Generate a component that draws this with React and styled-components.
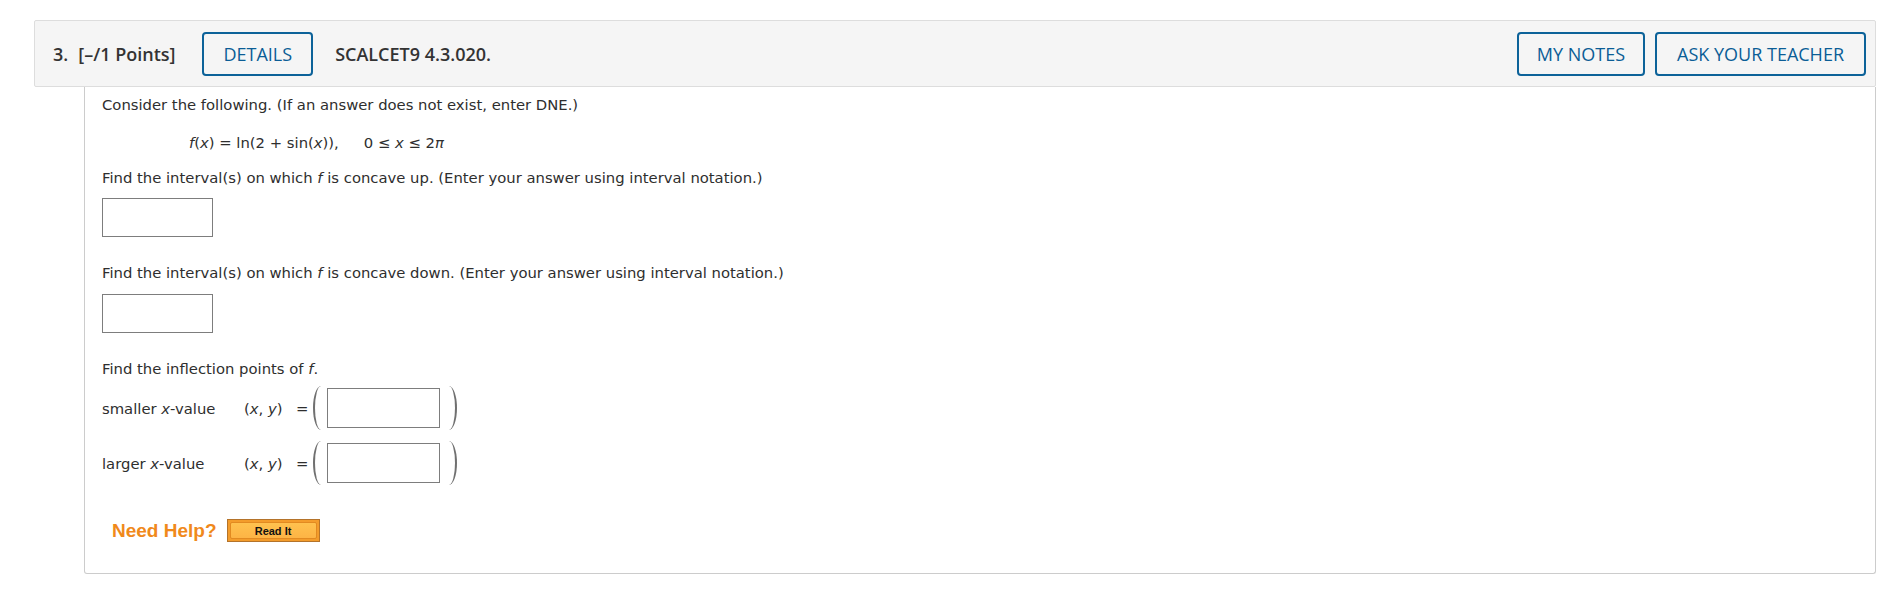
import React from "react";
import styled, { createGlobalStyle } from "styled-components";

const GlobalStyle = createGlobalStyle`
  body {
    margin: 0;
    background: #ffffff;
  }
`;

const Page = styled.div`
  padding: 20px 4px 0 34px;
`;

const Header = styled.div`
  height: 65px;
  display: flex;
  align-items: center;
  background: #f5f5f5;
  border: 1px solid #dddddd;
  border-radius: 2px;
  padding: 0 9px 0 18px;
  font-family: "Open Sans", "Liberation Sans", sans-serif;
  color: #333333;
`;

const HeadText = styled.span`
  font-size: 18px;
  font-weight: 600;
  margin-right: ${(props) => props.gap || 0}px;
`;

const OutlineButton = styled.button`
  height: 44px;
  padding: 0 ${(props) => props.pad || 16}px;
  border: 2px solid #0c6299;
  border-radius: 4px;
  background: transparent;
  color: #0b5d96;
  font-family: "Open Sans", "Liberation Sans", sans-serif;
  font-size: 18px;
  margin-right: ${(props) => props.gap || 0}px;
  cursor: pointer;
`;

const Spacer = styled.div`
  flex: 1;
`;

const Panel = styled.div`
  margin-left: 50px;
  border: 1px solid #cccccc;
  border-top: none;
  border-radius: 0 0 3px 3px;
  padding: 9px 18px 31px 17px;
  font-family: "DejaVu Sans", Verdana, sans-serif;
  font-size: 14.8px;
  line-height: 17px;
  color: #2e2e2e;
`;

const Para = styled.div`
  margin-top: ${(props) => props.top || 0}px;
  padding-left: ${(props) => props.indent || 0}px;
  white-space: pre;
`;

const I = styled.i`
  font-style: italic;
`;

const Gap = styled.span`
  display: inline-block;
  width: ${(props) => props.w}px;
`;

const AnswerBox = styled.input`
  display: block;
  box-sizing: border-box;
  width: ${(props) => props.w || 111}px;
  height: ${(props) => props.h || 39}px;
  margin-top: ${(props) => props.top || 0}px;
  border: 1px solid #7d7d7d;
  background: #ffffff;
  padding: 0 4px;
  font: inherit;
  outline: none;
`;

const PointRow = styled.div`
  display: flex;
  align-items: center;
  margin-top: ${(props) => props.top || 0}px;
`;

const RowLabel = styled.span`
  width: 142px;
`;

const Pair = styled.span`
  width: 52px;
`;

const Eq = styled.span`
  width: 15px;
`;

const Paren = styled.span`
  display: block;
  box-sizing: border-box;
  width: 8px;
  height: 44px;
  border: 0 solid #707070;
  border-left-width: ${(props) => (props.right ? 0 : 2)}px;
  border-right-width: ${(props) => (props.right ? 2 : 0)}px;
  border-radius: ${(props) =>
    props.right ? "0 100% 100% 0 / 0 50% 50% 0" : "100% 0 0 100% / 50% 0 0 50%"};
  margin: ${(props) => (props.right ? "0 0 0 9px" : "0 6px 0 2px")};
`;

const HelpRow = styled.div`
  display: flex;
  align-items: center;
  margin-top: ${(props) => props.top || 0}px;
  padding-left: 10px;
`;

const HelpText = styled.span`
  font-family: "Liberation Sans", Arial, sans-serif;
  font-weight: bold;
  font-size: 19px;
  color: #f0891b;
  margin-right: 10px;
`;

const ReadIt = styled.button`
  box-sizing: border-box;
  width: 93px;
  height: 23px;
  padding: 2px;
  border: 1px solid #b4732a;
  background: #f39c2b;
  cursor: pointer;
`;

const ReadItFace = styled.span`
  display: flex;
  align-items: center;
  justify-content: center;
  box-sizing: border-box;
  height: 100%;
  border: 1px solid #e28a21;
  border-radius: 2px;
  background: linear-gradient(#ffc24f, #fdb445);
  font-family: "Liberation Sans", Arial, sans-serif;
  font-weight: bold;
  font-size: 11px;
  color: #111111;
`;

const InflectionRow = ({ label, top }) => (
  <PointRow top={top}>
    <RowLabel>
      {label} <I>x</I>-value
    </RowLabel>
    <Pair>
      (<I>x</I>, <I>y</I>)
    </Pair>
    <Eq>=</Eq>
    <Paren />
    <AnswerBox w={113} h={40} />
    <Paren right />
  </PointRow>
);

export default function App() {
  return (
    <Page>
      <GlobalStyle />
      <Header>
        <HeadText gap={10}>3.</HeadText>
        <HeadText gap={27}>[–/1 Points]</HeadText>
        <OutlineButton pad={19} gap={22}>DETAILS</OutlineButton>
        <HeadText>SCALCET9 4.3.020.</HeadText>
        <Spacer />
        <OutlineButton pad={18} gap={10}>MY NOTES</OutlineButton>
        <OutlineButton pad={20}>ASK YOUR TEACHER</OutlineButton>
      </Header>
      <Panel>
        <Para>Consider the following. (If an answer does not exist, enter DNE.)</Para>
        <Para top={21} indent={87}>
          <I>f</I>(<I>x</I>) = ln(2 + sin(<I>x</I>)),
          <Gap w={25} />0 ≤ <I>x</I> ≤ 2<I>π</I>
        </Para>
        <Para top={18}>
          Find the interval(s) on which <I>f</I> is concave up. (Enter your answer using
          interval notation.)
        </Para>
        <AnswerBox top={12} />
        <Para top={27}>
          Find the interval(s) on which <I>f</I> is concave down. (Enter your answer using
          interval notation.)
        </Para>
        <AnswerBox top={13} />
        <Para top={27}>
          Find the inflection points of <I>f</I>.
        </Para>
        <InflectionRow label="smaller" top={9} />
        <InflectionRow label="larger" top={11} />
        <HelpRow top={34}>
          <HelpText>Need Help?</HelpText>
          <ReadIt>
            <ReadItFace>Read It</ReadItFace>
          </ReadIt>
        </HelpRow>
      </Panel>
    </Page>
  );
}
